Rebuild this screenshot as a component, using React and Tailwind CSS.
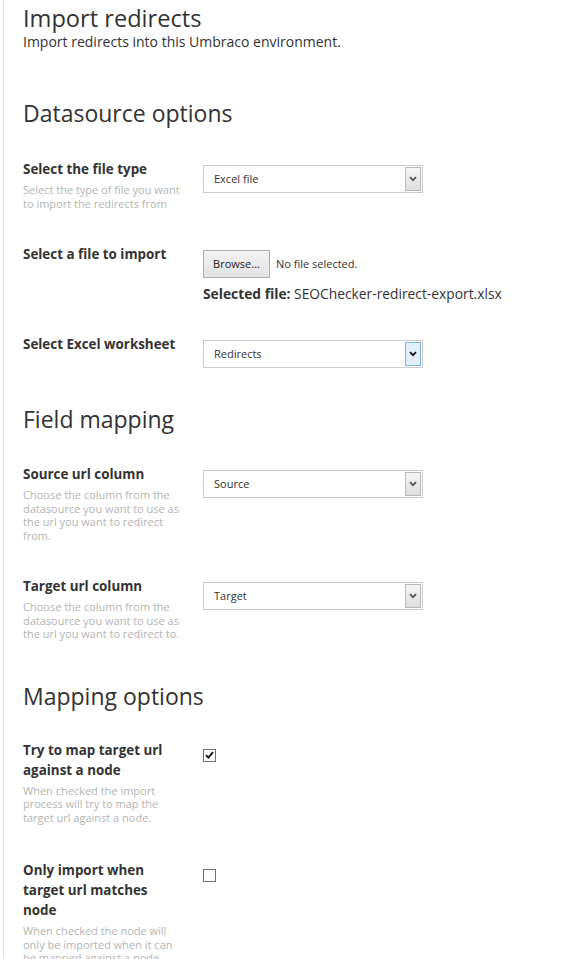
import React from "react";

const font = { fontFamily: '"Open Sans", "Noto Sans", sans-serif' };

function Chevron({ dark }) {
  return (
    <svg width="8" height="6" viewBox="0 0 8 6" className="block">
      <path
        d="M1 1.2 L4 4.2 L7 1.2"
        fill="none"
        stroke={dark ? "#111" : "#555"}
        strokeWidth="1.8"
      />
    </svg>
  );
}

function Select({ value, focused }) {
  return (
    <div className="flex h-[28px] w-[220px] items-center justify-between border border-[#ccc] bg-white pl-[10px] pr-[1px]">
      <span className="text-[11px] text-[#333]">{value}</span>
      <span
        className={
          focused
            ? "flex h-[24px] w-[16px] items-center justify-center border border-[#7eb4ea] bg-[#e1effb]"
            : "flex h-[24px] w-[16px] items-center justify-center border border-[#b9b9b9] bg-gradient-to-b from-[#f6f6f6] to-[#dedede]"
        }
      >
        <Chevron dark={focused} />
      </span>
    </div>
  );
}

function Checkbox({ checked }) {
  return (
    <div className="mt-[9px] flex h-[13px] w-[13px] items-center justify-center border border-[#707070] bg-white">
      {checked && (
        <svg width="9" height="8" viewBox="0 0 9 8">
          <path d="M1 4.2 L3.4 6.6 L8 1.2" fill="none" stroke="#111" strokeWidth="1.9" />
        </svg>
      )}
    </div>
  );
}

function Row({ label, desc, children, className = "" }) {
  return (
    <div className={`flex ${className}`}>
      <div className="w-[180px] shrink-0 pr-[18px]">
        <div className="max-w-[156px] text-[13.4px] font-bold leading-[20px] text-[#333]">
          {label}
        </div>
        {desc && (
          <div className="mt-[4px] text-[11px] leading-[13.5px] text-[#b5b5b5]">{desc}</div>
        )}
      </div>
      <div>{children}</div>
    </div>
  );
}

function Heading({ children, className = "" }) {
  return (
    <h2 className={`text-[23px] leading-[30px] text-[#333] ${className}`}>{children}</h2>
  );
}

export default function App() {
  return (
    <div className="min-h-[959px] bg-white" style={font}>
      <div className="ml-[3px] min-h-[959px] border-l border-[#e2e2e2] pl-[19px] pt-[3px]">
        <h1 className="text-[23.6px] leading-[30px] text-[#333]">Import redirects</h1>
        <p className="text-[14px] leading-[18px] text-[#333]">
          Import redirects into this Umbraco environment.
        </p>

        <Heading className="mt-[47px]">Datasource options</Heading>

        <Row
          className="mt-[31px]"
          label="Select the file type"
          desc="Select the type of file you want to import the redirects from"
        >
          <div className="mt-[6px]">
            <Select value="Excel file" />
          </div>
        </Row>

        <Row className="mt-[34px]" label="Select a file to import">
          <div className="mt-[6px] flex items-center">
            <button className="h-[28px] w-[67px] border border-[#adadad] bg-gradient-to-b from-[#f2f2f2] to-[#e3e3e3] text-[11px] text-[#222]">
              Browse...
            </button>
            <span className="ml-[6px] text-[11px] text-[#333]">No file selected.</span>
          </div>
          <div className="mt-[6px] text-[13.8px] leading-[20px] text-[#333]">
            <span className="font-bold">Selected file:</span> SEOChecker-redirect-export.xlsx
          </div>
        </Row>

        <Row className="mt-[30px]" label="Select Excel worksheet">
          <div className="mt-[6px]">
            <Select value="Redirects" focused />
          </div>
        </Row>

        <Heading className="mt-[36px]">Field mapping</Heading>

        <Row
          className="mt-[30px]"
          label="Source url column"
          desc="Choose the column from the datasource you want to use as the url you want to redirect from."
        >
          <div className="mt-[6px]">
            <Select value="Source" />
          </div>
        </Row>

        <Row
          className="mt-[34px]"
          label="Target url column"
          desc="Choose the column from the datasource you want to use as the url you want to redirect to."
        >
          <div className="mt-[6px]">
            <Select value="Target" />
          </div>
        </Row>

        <Heading className="mt-[40px]">Mapping options</Heading>

        <Row
          className="mt-[29px]"
          label="Try to map target url against a node"
          desc="When checked the import process will try to map the target url against a node."
        >
          <Checkbox checked />
        </Row>

        <Row
          className="mt-[36px]"
          label="Only import when target url matches node"
          desc="When checked the node will only be imported when it can be mapped against a node."
        >
          <Checkbox />
        </Row>
      </div>
    </div>
  );
}
